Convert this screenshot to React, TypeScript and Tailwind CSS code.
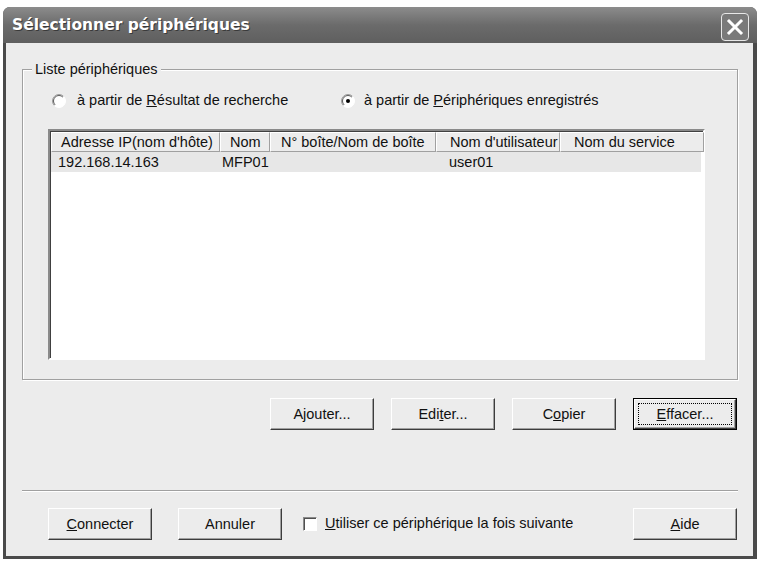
import React from "react";

const font = "font-['Liberation_Sans',Arial,sans-serif]";

const raised =
  "border border-t-white border-l-white border-r-[#3c3c3c] border-b-[#3c3c3c] shadow-[inset_-1px_-1px_0_#a0a0a0] bg-[#ececec]";

function Btn(props: { children: React.ReactNode; focused?: boolean }) {
  if (props.focused) {
    return (
      <div className="h-[32px] w-[104px] border border-black">
        <div className={`${raised} flex h-full w-full items-center justify-center p-[3px]`}>
          <div className="flex h-full w-full items-center justify-center border border-dotted border-black text-[14.5px] leading-none">
            {props.children}
          </div>
        </div>
      </div>
    );
  }
  return (
    <div className={`${raised} flex h-[32px] w-[104px] items-center justify-center text-[14.5px] leading-none`}>
      {props.children}
    </div>
  );
}

function Radio(props: { checked?: boolean }) {
  return (
    <svg width="14" height="14" viewBox="0 0 14 14" className="shrink-0">
      <circle cx="7" cy="7" r="6.5" fill="white" />
      <path d="M11.6 2.4 A6.5 6.5 0 0 0 2.4 11.6" fill="none" stroke="#9a9a9a" strokeWidth="1" />
      <path d="M10.9 3.1 A5.5 5.5 0 0 0 3.1 10.9" fill="none" stroke="#5a5a5a" strokeWidth="1" />
      <path d="M11.6 2.4 A6.5 6.5 0 0 1 2.4 11.6" fill="none" stroke="#ffffff" strokeWidth="1" />
      {props.checked ? <circle cx="7" cy="7" r="2" fill="black" /> : null}
    </svg>
  );
}

const columns = [
  { label: "Adresse IP(nom d'hôte)", width: "w-[169px]", pad: "pl-[9px]" },
  { label: "Nom", width: "w-[50px]", pad: "pl-[9px]" },
  { label: "N° boîte/Nom de boîte", width: "w-[166px]", pad: "pl-[10px]" },
  { label: "Nom d'utilisateur", width: "w-[124px]", pad: "pl-[13px]" },
  { label: "Nom du service", width: "w-[144px]", pad: "pl-[13px]" },
];

export default function App() {
  return (
    <div className={`h-[562px] w-[759px] bg-white pl-[3px] pt-[7px] text-[#111] ${font}`}>
      <div className="flex h-[552px] w-[754px] flex-col overflow-hidden rounded-t-[7px] bg-[#4a4a4a]">
        {/* title bar */}
        <div className="flex h-[36px] shrink-0 items-start justify-between bg-gradient-to-b from-[#8c8c8c] via-[#6b6b6b] to-[#5f5f5f] pl-[9px] pr-[8px]">
          <span className="mt-[8px] font-['DejaVu_Sans',Verdana,sans-serif] text-[15.5px] font-bold leading-[20px] text-white [text-shadow:1px_1px_0_#3a3a3a]">
            Sélectionner périphériques
          </span>
          <div className="mt-[6px] flex h-[28px] w-[28px] items-center justify-center rounded-[4px] border border-[#e8e8e8] bg-[#7a7a7a]">
            <svg width="18" height="18" viewBox="0 0 18 18">
              <path d="M3 3 L15 15 M15 3 L3 15" stroke="white" strokeWidth="3" strokeLinecap="square" />
            </svg>
          </div>
        </div>

        {/* body */}
        <div className="mb-[3px] ml-[3px] mr-[4px] flex flex-1 flex-col bg-[#ececec]">
          <fieldset className="ml-[16px] mr-[15px] mt-[18px] h-[319px] border border-[#a0a0a0] shadow-[inset_1px_1px_0_white,1px_1px_0_white]">
            <legend className="ml-[9px] bg-[#ececec] px-[3px] text-[14.5px] leading-[16px]">Liste périphériques</legend>
            <div className="mt-[16px] flex h-[16px] items-center pl-[29px] text-[14.5px]">
              <div className="flex w-[289px] items-center gap-[11px]">
                <Radio />
                <span>
                  à partir de <u>R</u>ésultat de recherche
                </span>
              </div>
              <div className="flex items-center gap-[9px]">
                <Radio checked />
                <span>
                  à partir de <u>P</u>ériphériques enregistrés
                </span>
              </div>
            </div>

            <div className="ml-[25px] mt-[20px] h-[231px] w-[657px] border-2 border-t-[#8a8a8a] border-l-[#8a8a8a] border-b-white border-r-white bg-white shadow-[inset_1px_1px_0_#404040]">
              <div className="flex h-[21px] pl-[1px] pt-[1px] text-[14.5px]">
                {columns.map((c) => (
                  <div
                    key={c.label}
                    className={`${c.width} ${c.pad} flex shrink-0 items-center whitespace-nowrap border-b border-r border-l border-t border-t-white border-l-white border-r-[#a0a0a0] border-b-[#a0a0a0] bg-[#ececec] leading-none`}
                  >
                    {c.label}
                  </div>
                ))}
              </div>
              <div className="ml-[1px] mr-[2px] flex h-[20px] items-center bg-[#e7e7e7] text-[14.5px] leading-none">
                <span className="w-[169px] pl-[7px]">192.168.14.163</span>
                <span className="w-[50px] pl-[2px]">MFP01</span>
                <span className="w-[166px]" />
                <span className="w-[124px] pl-[13px]">user01</span>
              </div>
            </div>
          </fieldset>

          <div className="mt-[18px] flex justify-end gap-[17px] pr-[16px]">
            <Btn>Ajouter...</Btn>
            <Btn>
              Edi<u>t</u>er...
            </Btn>
            <Btn>
              C<u>o</u>pier
            </Btn>
            <Btn focused>
              <u>E</u>ffacer...
            </Btn>
          </div>

          <div className="ml-[16px] mr-[15px] mt-[60px] h-[2px] border-b border-t border-b-white border-t-[#a0a0a0]" />

          <div className="mt-[16px] flex items-center pl-[42px] pr-[16px] text-[14.5px]">
            <Btn>
              <u>C</u>onnecter
            </Btn>
            <div className="ml-[26px]">
              <Btn>Annuler</Btn>
            </div>
            <span className="ml-[21px] h-[14px] w-[14px] shrink-0 border border-t-[#8a8a8a] border-l-[#8a8a8a] border-b-white border-r-white bg-white shadow-[inset_1px_1px_0_#505050]" />
            <span className="ml-[8px]">
              <u>U</u>tiliser ce périphérique la fois suivante
            </span>
            <div className="ml-auto">
              <Btn>
                <u>A</u>ide
              </Btn>
            </div>
          </div>
        </div>
      </div>
    </div>
  );
}
